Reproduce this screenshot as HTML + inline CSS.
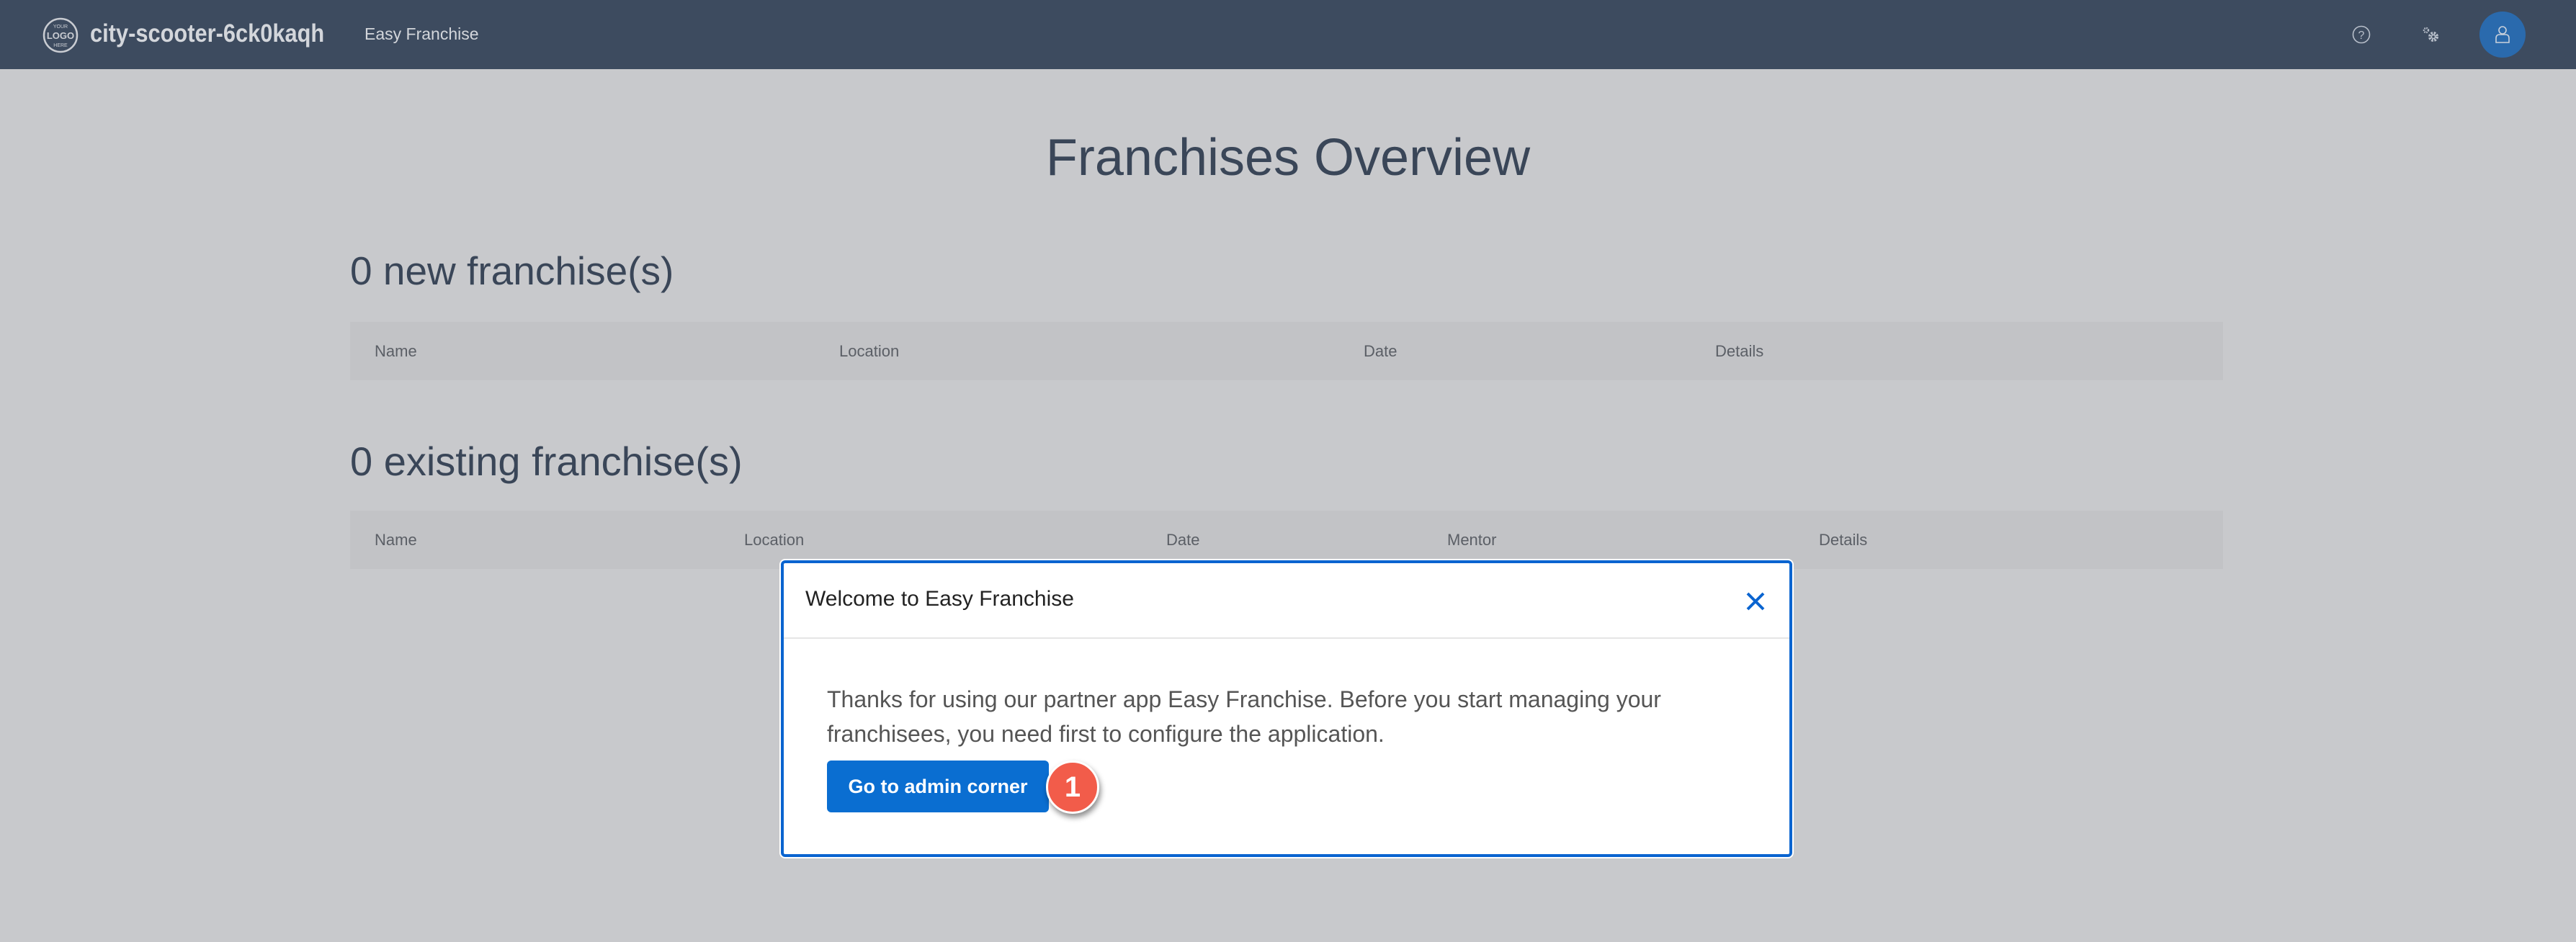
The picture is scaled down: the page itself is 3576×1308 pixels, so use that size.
<!DOCTYPE html>
<html><head><meta charset="utf-8"><style>
*{margin:0;padding:0;box-sizing:border-box}
body{width:3576px;height:1308px;background:#c8c9cc;font-family:"Liberation Sans",sans-serif;position:relative;overflow:hidden}
.hdr{position:absolute;left:0;top:0;width:3576px;height:96px;background:#3d4b5f}
.abs{position:absolute;white-space:nowrap}
.th{position:absolute;left:486px;width:2600px;height:81px;background:#c2c3c6}
.th span{position:absolute;top:0;line-height:81px;font-size:22px;color:#5b5f66}
h1,h2{font-weight:normal;color:#3a4658}
</style></head><body>
<div class="hdr">
  <svg class="abs" style="left:58px;top:23px" width="52" height="52" viewBox="0 0 52 52"><circle cx="26" cy="26" r="23" fill="none" stroke="#c9ccd2" stroke-width="2.5"/><text x="26" y="31" text-anchor="middle" font-family="Liberation Sans" font-weight="bold" font-size="13" fill="#c9ccd2">LOGO</text><text x="26" y="16" text-anchor="middle" font-family="Liberation Sans" font-size="7" fill="#c9ccd2">YOUR</text><text x="26" y="42" text-anchor="middle" font-family="Liberation Sans" font-size="7" fill="#c9ccd2">HERE</text></svg>
  <div class="abs" style="left:125px;top:27px;font-size:35px;font-weight:bold;color:#d3d6db;transform:scaleX(0.88);transform-origin:0 0">city-scooter-6ck0kaqh</div>
  <div class="abs" style="left:506px;top:34px;font-size:23px;color:#d3d6db">Easy Franchise</div>
  <svg class="abs" style="left:3264px;top:34px" width="28" height="28" viewBox="0 0 28 28"><circle cx="14" cy="14" r="11.5" fill="none" stroke="#b8bfca" stroke-width="1.6"/><text x="14" y="20" text-anchor="middle" font-family="Liberation Sans" font-size="16" fill="#b8bfca">?</text></svg>
  <svg class="abs" style="left:3360px;top:34px" width="28" height="28" viewBox="0 0 28 28"><circle cx="18" cy="17" r="5" fill="none" stroke="#b8bfca" stroke-width="4" stroke-dasharray="2.5 1.5"/><circle cx="18" cy="17" r="2.5" fill="none" stroke="#b8bfca" stroke-width="1.5"/><circle cx="8" cy="8" r="3" fill="none" stroke="#b8bfca" stroke-width="2.5" stroke-dasharray="1.6 1.2"/></svg>
  <div class="abs" style="left:3442px;top:16px;width:64px;height:64px;border-radius:50%;background:#2a6aad"></div>
  <svg class="abs" style="left:3460px;top:34px" width="28" height="28" viewBox="0 0 28 28"><circle cx="14" cy="8" r="5" fill="none" stroke="#c9d1dc" stroke-width="1.6"/><path d="M5 25 V19 Q5 14 10 14 H18 Q23 14 23 19 V25 Z" fill="none" stroke="#c9d1dc" stroke-width="1.6"/></svg>
</div>
<h1 class="abs" style="left:0;width:3576px;text-align:center;top:178px;font-size:72px">Franchises Overview</h1>
<h2 class="abs" style="left:486px;top:344px;font-size:55px">0 new franchise(s)</h2>
<div class="th" style="top:447px"><span style="left:34px">Name</span><span style="left:679px">Location</span><span style="left:1407px">Date</span><span style="left:1895px">Details</span></div>
<h2 class="abs" style="left:486px;top:608px;font-size:56px">0 existing franchise(s)</h2>
<div class="th" style="top:709px"><span style="left:34px">Name</span><span style="left:547px">Location</span><span style="left:1133px">Date</span><span style="left:1523px">Mentor</span><span style="left:2039px">Details</span></div>
<div class="abs" style="left:1084px;top:778px;width:1404px;height:412px;background:#fff;border:4px solid #0a64d0;border-radius:6px;box-shadow:0 0 0 2px #fff">
  <div class="abs" style="left:30px;top:33px;font-size:30px;color:#222">Welcome to Easy Franchise</div>
  <svg class="abs" style="left:1334px;top:38px" width="30" height="30" viewBox="0 0 30 30"><path d="M4 4 L26 26 M26 4 L4 26" stroke="#0a64d0" stroke-width="4"/></svg>
  <div class="abs" style="left:0;top:103px;width:1396px;height:2px;background:#e5e5e5"></div>
  <div class="abs" style="left:60px;top:165px;font-size:32px;line-height:48px;color:#555">Thanks for using our partner app Easy Franchise. Before you start managing your<br>franchisees, you need first to configure the application.</div>
  <div class="abs" style="left:60px;top:274px;width:308px;height:72px;background:#0a6ed1;border-radius:6px;color:#fff;font-weight:bold;font-size:27px;line-height:72px;text-align:center">Go to admin corner</div>
  <div class="abs" style="left:364px;top:274px;width:74px;height:74px;border-radius:50%;background:#f25c4a;border:3px solid #fff;box-shadow:2px 5px 8px rgba(0,0,0,.45);color:#fff;font-weight:bold;font-size:40px;line-height:68px;text-align:center">1</div>
</div>
</body></html>
